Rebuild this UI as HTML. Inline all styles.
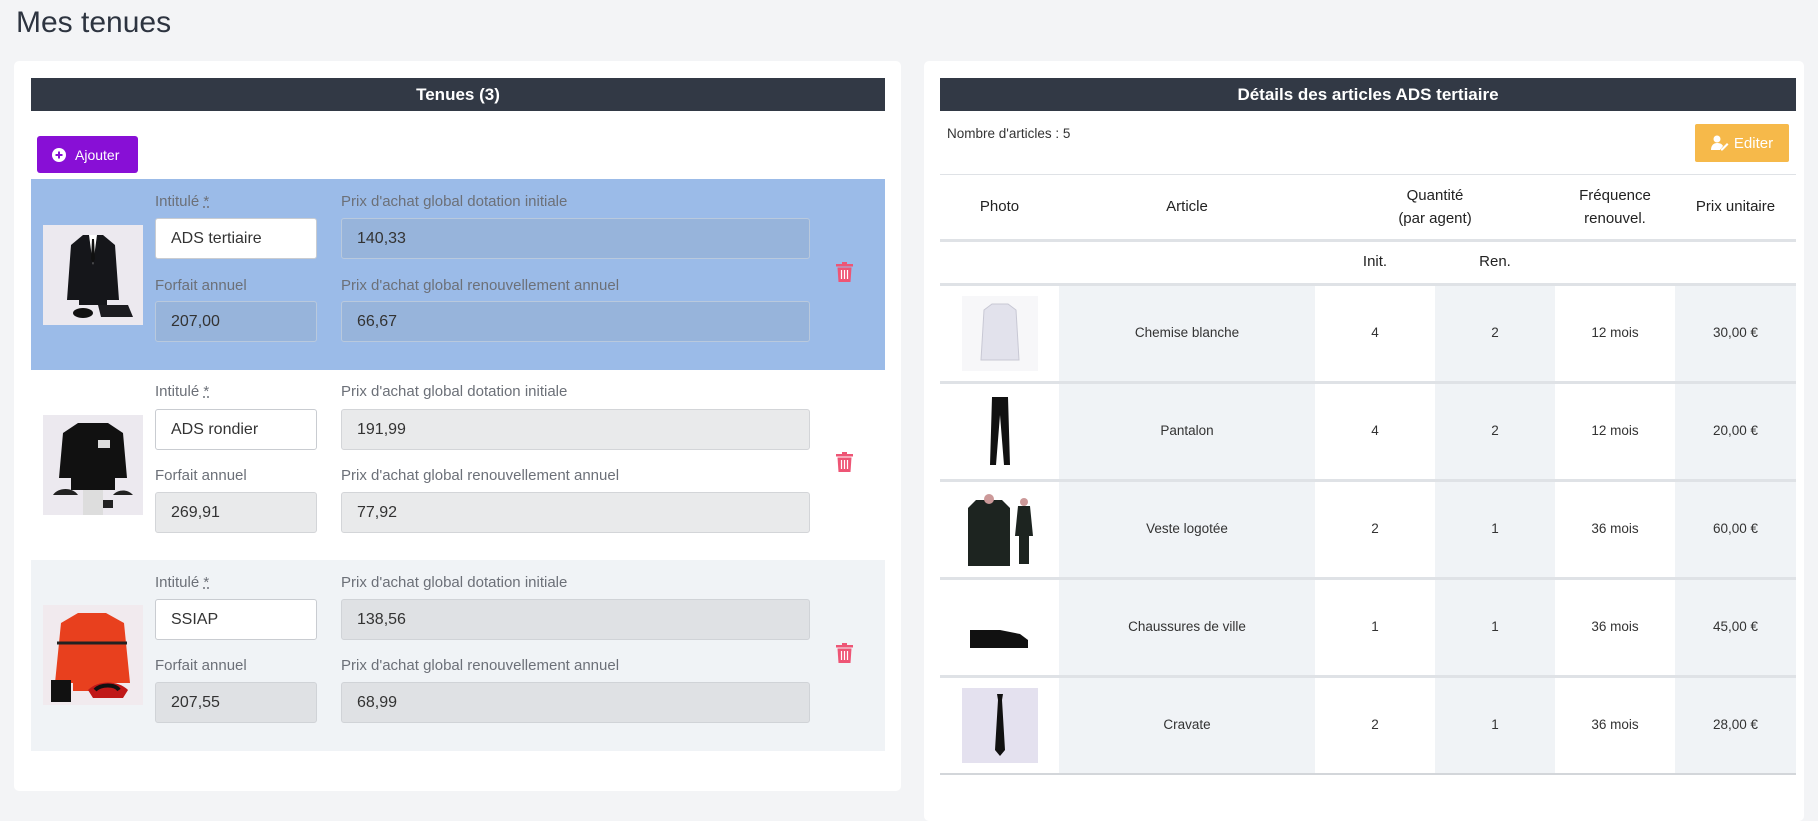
<!DOCTYPE html>
<html><head><meta charset="utf-8">
<style>
*{box-sizing:border-box;margin:0;padding:0}
body{width:1818px;height:800px;background:#f3f4f6;font-family:"Liberation Sans",sans-serif;position:relative;overflow:hidden;color:#333}
.a{position:absolute}
.card{position:absolute;background:#fff;border-radius:5px}
.bar{position:absolute;background:#323945;color:#fff;font-weight:bold;font-size:17px;display:flex;align-items:center;justify-content:center}
.lbl{position:absolute;font-size:15px;color:#6c7078}
.inp{position:absolute;border:1px solid #c9ccd1;border-radius:3px;font-size:16px;padding-left:15px;display:flex;align-items:center;color:#333}
.row{position:absolute;left:31px;width:854px;height:191px}
.th{position:absolute;font-size:15px;color:#222;text-align:center;line-height:23px}
.td{position:absolute;font-size:13.5px;color:#333;text-align:center}
.col{position:absolute;top:284px;height:490px;background:#f0f3f6}
.hl{position:absolute;left:940px;width:856px;background:#dfe2e6}
</style></head><body>
<div class="a" style="left:16px;top:6px;font-size:30px;color:#2d3440">Mes tenues</div>

<div class="card" style="left:14px;top:61px;width:887px;height:730px"></div>
<div class="card" style="left:924px;top:61px;width:880px;height:760px"></div>

<div class="bar" style="left:31px;top:78px;width:854px;height:33px">Tenues (3)</div>
<div class="a" style="left:37px;top:136px;width:101px;height:37px;background:#880fd6;border-radius:3px;color:#fff;font-size:14px;display:flex;align-items:center;padding-left:15px">
<svg width="14" height="14" viewBox="0 0 14 14" style="margin-right:9px"><circle cx="7" cy="7" r="7" fill="#fff"/><path d="M7 3.5v7M3.5 7h7" stroke="#880fd6" stroke-width="2"/></svg>Ajouter</div>

<!-- rows -->
<div class="row" style="top:179px;background:#9bbbe8"></div>
<div class="row" style="top:370px;background:#fff"></div>
<div class="row" style="top:560px;background:#f0f3f6"></div>

<!-- row 1 -->
<svg class="a" style="left:43px;top:225px" width="100" height="100" viewBox="0 0 100 100"><rect width="100" height="100" fill="#ece9ef"/><path d="M40 10h20l12 10 4 55h-12v5H36v-5H24l4-55z" fill="#15161a"/><path d="M46 10l4 30 4-30z" fill="#fff"/><path d="M49 14h2l1 20-2 4-2-4z" fill="#111"/><ellipse cx="40" cy="88" rx="10" ry="5" fill="#111"/><path d="M55 80h30l5 12H58z" fill="#1c1c20"/></svg>
<div class="lbl" style="left:155px;top:193px">Intitulé <u style="text-decoration-style:dotted">*</u></div>
<div class="inp" style="left:155px;top:218px;width:162px;height:41px;background:#fff">ADS tertiaire</div>
<div class="lbl" style="left:341px;top:193px">Prix d'achat global dotation initiale</div>
<div class="inp" style="left:341px;top:218px;width:469px;height:41px;background:#97b4db;border-color:#b9c9dd">140,33</div>
<div class="lbl" style="left:155px;top:277px">Forfait annuel</div>
<div class="inp" style="left:155px;top:301px;width:162px;height:41px;background:#97b4db;border-color:#b9c9dd">207,00</div>
<div class="lbl" style="left:341px;top:277px">Prix d'achat global renouvellement annuel</div>
<div class="inp" style="left:341px;top:301px;width:469px;height:41px;background:#97b4db;border-color:#b9c9dd">66,67</div>

<!-- row 2 -->
<svg class="a" style="left:43px;top:415px" width="100" height="100" viewBox="0 0 100 100"><rect width="100" height="100" fill="#ece9ef"/><path d="M35 8h30l15 10 4 45H72v12H28V63H16l4-45z" fill="#111"/><rect x="55" y="25" width="12" height="8" fill="#ddd"/><path d="M10 80c5-8 20-8 25 0z M40 85h30v8H40z M70 80c5-6 15-6 20 0z" fill="#222"/><rect x="40" y="75" width="20" height="25" fill="#ddd"/></svg>
<div class="lbl" style="left:155px;top:383px">Intitulé <u style="text-decoration-style:dotted">*</u></div>
<div class="inp" style="left:155px;top:409px;width:162px;height:41px;background:#fff">ADS rondier</div>
<div class="lbl" style="left:341px;top:383px">Prix d'achat global dotation initiale</div>
<div class="inp" style="left:341px;top:409px;width:469px;height:41px;background:#e9eaeb;border-color:#d3d5d8">191,99</div>
<div class="lbl" style="left:155px;top:467px">Forfait annuel</div>
<div class="inp" style="left:155px;top:492px;width:162px;height:41px;background:#e9eaeb;border-color:#d3d5d8">269,91</div>
<div class="lbl" style="left:341px;top:467px">Prix d'achat global renouvellement annuel</div>
<div class="inp" style="left:341px;top:492px;width:469px;height:41px;background:#e9eaeb;border-color:#d3d5d8">77,92</div>

<!-- row 3 -->
<svg class="a" style="left:43px;top:605px" width="100" height="100" viewBox="0 0 100 100"><rect width="100" height="100" fill="#f1eaee"/><path d="M35 8h28l18 10 6 60H70v8H30v-8H12l6-60z" fill="#e8401e"/><path d="M14 38h70" stroke="#222" stroke-width="3"/><path d="M8 75h20v22H8z" fill="#111"/><path d="M45 85c10-10 30-10 40 0l-5 8H50z" fill="#c01818"/><path d="M52 85c6-6 20-6 24 0" stroke="#111" stroke-width="4" fill="none"/></svg>
<div class="lbl" style="left:155px;top:574px">Intitulé <u style="text-decoration-style:dotted">*</u></div>
<div class="inp" style="left:155px;top:599px;width:162px;height:41px;background:#fff">SSIAP</div>
<div class="lbl" style="left:341px;top:574px">Prix d'achat global dotation initiale</div>
<div class="inp" style="left:341px;top:599px;width:469px;height:41px;background:#dfe1e4;border-color:#d0d3d7">138,56</div>
<div class="lbl" style="left:155px;top:657px">Forfait annuel</div>
<div class="inp" style="left:155px;top:682px;width:162px;height:41px;background:#dfe1e4;border-color:#d0d3d7">207,55</div>
<div class="lbl" style="left:341px;top:657px">Prix d'achat global renouvellement annuel</div>
<div class="inp" style="left:341px;top:682px;width:469px;height:41px;background:#dfe1e4;border-color:#d0d3d7">68,99</div>

<!-- trash icons -->
<svg class="a" style="left:836px;top:262px" width="17" height="20" viewBox="0 0 17 20"><path d="M6 0h5v2h6v2.5H0V2h6z" fill="#ee5575"/><path d="M1.5 5.5h14l-1 14.5h-12z" fill="#ee5575"/><path d="M5.5 8v9M8.5 8v9M11.5 8v9" stroke="#fff" stroke-width="1.2"/></svg>
<svg class="a" style="left:836px;top:452px" width="17" height="20" viewBox="0 0 17 20"><path d="M6 0h5v2h6v2.5H0V2h6z" fill="#ee5575"/><path d="M1.5 5.5h14l-1 14.5h-12z" fill="#ee5575"/><path d="M5.5 8v9M8.5 8v9M11.5 8v9" stroke="#fff" stroke-width="1.2"/></svg>
<svg class="a" style="left:836px;top:643px" width="17" height="20" viewBox="0 0 17 20"><path d="M6 0h5v2h6v2.5H0V2h6z" fill="#ee5575"/><path d="M1.5 5.5h14l-1 14.5h-12z" fill="#ee5575"/><path d="M5.5 8v9M8.5 8v9M11.5 8v9" stroke="#fff" stroke-width="1.2"/></svg>

<!-- right -->
<div class="bar" style="left:940px;top:78px;width:856px;height:33px">Détails des articles ADS tertiaire</div>
<div class="a" style="left:947px;top:126px;font-size:13.5px;color:#333">Nombre d'articles : 5</div>
<div class="a" style="left:1695px;top:124px;width:94px;height:38px;background:#f6b94a;border-radius:2px;color:#fff;font-size:15px;display:flex;align-items:center;justify-content:center">
<svg width="18" height="16" viewBox="0 0 18 16" style="margin-right:5px"><circle cx="6" cy="4" r="3.5" fill="#fff"/><path d="M0 15c0-5 3-7 6-7s5 1 6 3l-3 4z" fill="#fff"/><path d="M10 14l6-6 1.5 1.5-6 6H10z" fill="#fff"/></svg>Editer</div>

<div class="col" style="left:1059px;width:256px"></div>
<div class="col" style="left:1435px;width:120px"></div>
<div class="col" style="left:1675px;width:121px"></div>

<div class="hl" style="top:174px;height:1px"></div>
<div class="hl" style="top:239px;height:3px"></div>
<div class="hl" style="top:283px;height:3px"></div>
<div class="hl" style="top:381px;height:3px"></div>
<div class="hl" style="top:479px;height:3px"></div>
<div class="hl" style="top:577px;height:3px"></div>
<div class="hl" style="top:675px;height:3px"></div>
<div class="hl" style="top:773px;height:2px;background:#d3d6da"></div>

<div class="th" style="left:940px;width:119px;top:195px">Photo</div>
<div class="th" style="left:1059px;width:256px;top:195px">Article</div>
<div class="th" style="left:1315px;width:240px;top:184px">Quantité<br>(par agent)</div>
<div class="th" style="left:1555px;width:120px;top:184px">Fréquence<br>renouvel.</div>
<div class="th" style="left:1675px;width:121px;top:195px">Prix unitaire</div>
<div class="th" style="left:1315px;width:120px;top:250px">Init.</div>
<div class="th" style="left:1435px;width:120px;top:250px">Ren.</div>

<!-- table rows: centers at 333, 431, 529, 627, 725 -->
<svg class="a" style="left:962px;top:296px" width="76" height="75" viewBox="0 0 76 75"><rect width="76" height="75" fill="#f7f7f9"/><path d="M30 8h16l8 6 3 50H19l3-50z" fill="#e2e2ec" stroke="#c8c8d4"/></svg>
<svg class="a" style="left:962px;top:394px" width="76" height="75" viewBox="0 0 76 75"><rect width="76" height="75" fill="#fff"/><path d="M30 3h16l2 68h-6l-4-50-4 50h-6z" fill="#111"/></svg>
<svg class="a" style="left:962px;top:492px" width="76" height="75" viewBox="0 0 76 75"><rect width="76" height="75" fill="#fff"/><path d="M14 8h26l8 8v58H6V16z" fill="#1d2420"/><circle cx="27" cy="7" r="5" fill="#c99"/><path d="M56 14h12l3 30h-4v28h-10V44h-4z" fill="#1d2420"/><circle cx="62" cy="10" r="4" fill="#c99"/></svg>
<svg class="a" style="left:962px;top:590px" width="76" height="75" viewBox="0 0 76 75"><rect width="76" height="75" fill="#fff"/><path d="M8 40h30l20 4 8 6v8H8z" fill="#111"/></svg>
<svg class="a" style="left:962px;top:688px" width="76" height="75" viewBox="0 0 76 75"><rect width="76" height="75" fill="#e4e1ef"/><path d="M35 6h6l-1 6 3 50-5 6-5-6 3-50z" fill="#111"/></svg>

<div class="td" style="left:1059px;width:256px;top:325px">Chemise blanche</div>
<div class="td" style="left:1315px;width:120px;top:325px">4</div>
<div class="td" style="left:1435px;width:120px;top:325px">2</div>
<div class="td" style="left:1555px;width:120px;top:325px">12 mois</div>
<div class="td" style="left:1675px;width:121px;top:325px">30,00 €</div>

<div class="td" style="left:1059px;width:256px;top:423px">Pantalon</div>
<div class="td" style="left:1315px;width:120px;top:423px">4</div>
<div class="td" style="left:1435px;width:120px;top:423px">2</div>
<div class="td" style="left:1555px;width:120px;top:423px">12 mois</div>
<div class="td" style="left:1675px;width:121px;top:423px">20,00 €</div>

<div class="td" style="left:1059px;width:256px;top:521px">Veste logotée</div>
<div class="td" style="left:1315px;width:120px;top:521px">2</div>
<div class="td" style="left:1435px;width:120px;top:521px">1</div>
<div class="td" style="left:1555px;width:120px;top:521px">36 mois</div>
<div class="td" style="left:1675px;width:121px;top:521px">60,00 €</div>

<div class="td" style="left:1059px;width:256px;top:619px">Chaussures de ville</div>
<div class="td" style="left:1315px;width:120px;top:619px">1</div>
<div class="td" style="left:1435px;width:120px;top:619px">1</div>
<div class="td" style="left:1555px;width:120px;top:619px">36 mois</div>
<div class="td" style="left:1675px;width:121px;top:619px">45,00 €</div>

<div class="td" style="left:1059px;width:256px;top:717px">Cravate</div>
<div class="td" style="left:1315px;width:120px;top:717px">2</div>
<div class="td" style="left:1435px;width:120px;top:717px">1</div>
<div class="td" style="left:1555px;width:120px;top:717px">36 mois</div>
<div class="td" style="left:1675px;width:121px;top:717px">28,00 €</div>
</body></html>
